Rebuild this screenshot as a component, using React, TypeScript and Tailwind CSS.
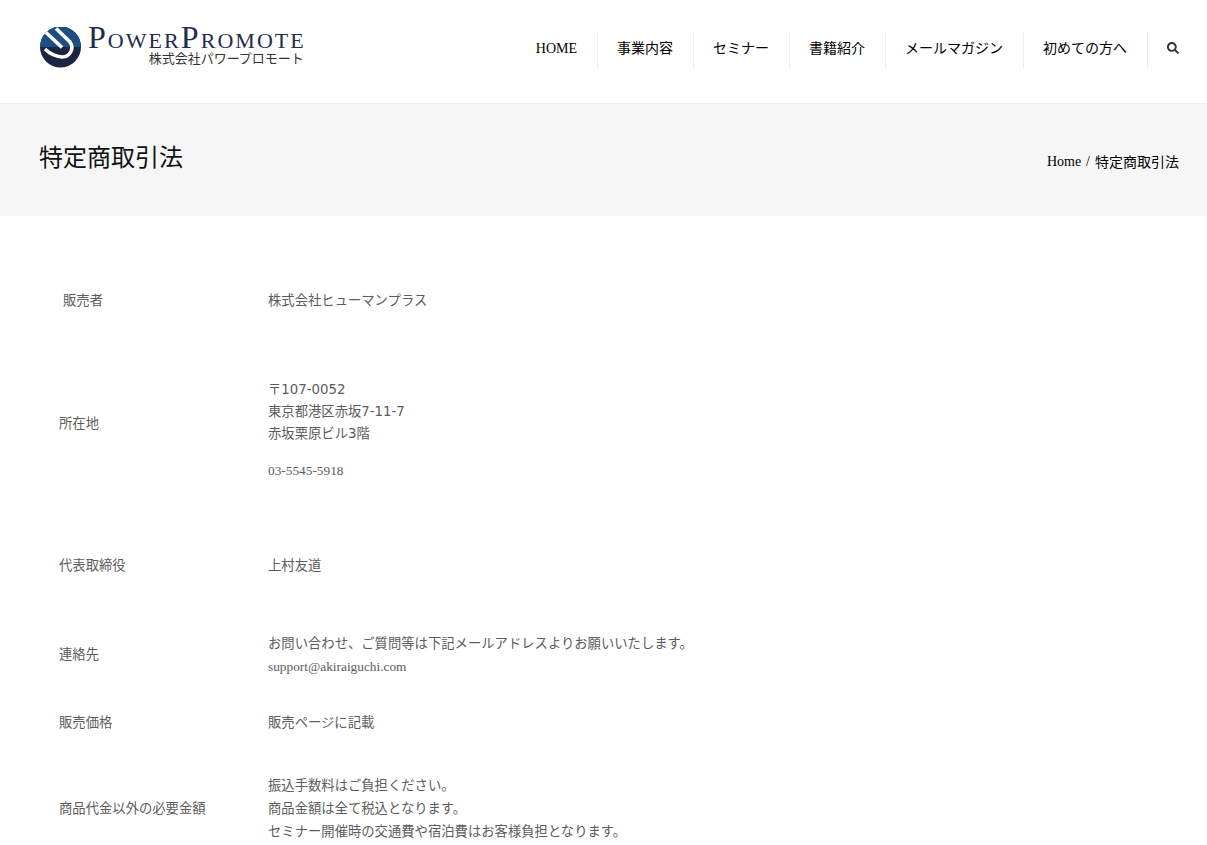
import { FaSearch } from 'react-icons/fa';

const serif = '[font-family:"Liberation_Serif","Noto_Sans_CJK_JP",serif]';
const digits = '[font-family:"DejaVu_Sans","Noto_Sans_CJK_JP",sans-serif]';

const navItems = ['HOME', '事業内容', 'セミナー', '書籍紹介', 'メールマガジン', '初めての方へ'];

function Logo() {
  return (
    <div className="flex items-start">
      <svg width="42" height="42" viewBox="0 0 42 42" className="shrink-0">
        <circle cx="20.5" cy="20" r="20.5" fill="#1c2542" />
        <path d="M0 20a20.5 20.5 0 0 1 41 0z" fill="#1d4f84" />
        <path d="M6 5.5 L22 20.5" fill="none" stroke="#fff" strokeWidth="3.6" />
        <path d="M16 1.5 L30 15 A9.5 9.5 0 0 1 22 30 Q12 29 5 22" fill="none" stroke="#fff" strokeWidth="3.6" />
      </svg>
      <div className="ml-[6px] flex flex-col items-end">
        <div className='[font-family:"Liberation_Serif",serif] -mt-[2px] text-[32px] leading-[24px] tracking-[2.05px] text-[#222c4c] [font-variant:small-caps]'>
          PowerPromote
        </div>
        <div className='[font-family:"Noto_Sans_CJK_JP",sans-serif] mt-[1px] mr-[2px] text-[13px] leading-[16px] text-[#333]'>
          株式会社パワープロモート
        </div>
      </div>
    </div>
  );
}

function Row({ label, labelClass, height, children }: { label: string; labelClass?: string; height: string; children: React.ReactNode }) {
  return (
    <div className={`flex items-center ${height}`}>
      <div className={`w-[228px] shrink-0 pl-[19px] ${labelClass ?? ''}`}>{label}</div>
      <div>{children}</div>
    </div>
  );
}

export default function App() {
  return (
    <div className='h-[845px] overflow-hidden bg-white [font-family:"Noto_Sans_CJK_JP",sans-serif]'>
      <header className="flex h-[104px] items-center justify-between border-b border-[#f0f0f0] pl-[40px] pr-[28px]">
        <div className="-mt-[8px]"><Logo /></div>
        <nav className="-mt-[4px] flex items-center text-[14px] text-black">
          {navItems.map((item, i) => (
            <div
              key={item}
              className={`flex h-[38px] items-center border-r border-[#efefef] pr-[20px] ${i === 0 ? `pb-[3px] ${serif}` : 'pb-[4px] pl-[19px]'}`}
            >
              {item}
            </div>
          ))}
          <div className="flex h-[38px] items-center pb-[4px] pl-[19px] text-[12px] text-[#333]">
            <FaSearch />
          </div>
        </nav>
      </header>

      <section className="flex h-[112px] items-center justify-between bg-[#f6f6f6] pl-[39px] pr-[28px]">
        <h1 className="-mt-[8px] text-[24px] leading-[32px] text-[#111]">特定商取引法</h1>
        <div className={`mt-[2px] flex items-center gap-[5px] text-[14px] text-black ${serif}`}>
          <span>Home</span>
          <span>/</span>
          <span className='[font-family:"Noto_Sans_CJK_JP",sans-serif]'>特定商取引法</span>
        </div>
      </section>

      <main className="pl-[40px] pt-[40px] text-[13.33px] leading-[22px] text-[#5c5c5c]">
        <Row label="販売者" labelClass="pl-[23px]" height="h-[88px]">株式会社ヒューマンプラス</Row>
        <Row label="所在地" height="h-[157px]">
          <div className="pt-[16px]">
            <div className={digits}>〒107-0052</div>
            <div className={digits}>東京都港区赤坂7-11-7</div>
            <div className={digits}>赤坂栗原ビル3階</div>
            <div className={`mt-[15px] ${serif}`}>03-5545-5918</div>
          </div>
        </Row>
        <Row label="代表取締役" height="h-[127px]">上村友道</Row>
        <Row label="連絡先" height="h-[51px]">
          <div className="pt-[2px]">
            <div>お問い合わせ、ご質問等は下記メールアドレスよりお願いいたします。</div>
            <div className={`mt-[2px] ${serif}`}>support@akiraiguchi.com</div>
          </div>
        </Row>
        <Row label="販売価格" height="h-[85px]">販売ページに記載</Row>
        <Row label="商品代金以外の必要金額" height="h-[87px]">
          <div className="leading-[23px]">振込手数料はご負担ください。</div>
          <div className="leading-[23px]">商品金額は全て税込となります。</div>
          <div className="leading-[23px]">セミナー開催時の交通費や宿泊費はお客様負担となります。</div>
        </Row>
      </main>
    </div>
  );
}
